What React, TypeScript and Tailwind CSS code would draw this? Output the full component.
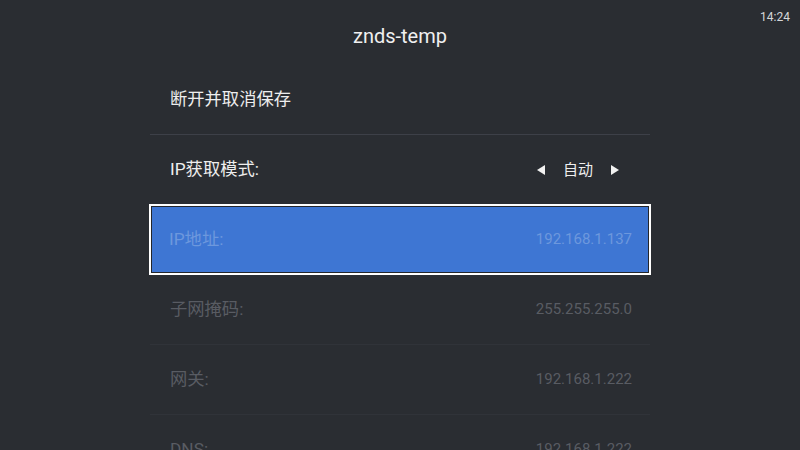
import React from "react";

const font = { fontFamily: "Roboto, 'Noto Sans CJK SC', sans-serif" };

function Row({ label, value, border = true }: { label: string; value: string; border?: boolean }) {
  return (
    <div className={`flex h-[70px] items-center justify-between pl-5 pr-[18px] ${border ? "border-b border-[#303339]" : ""}`}>
      <span className="text-[17.3px] text-[#595c63]">{label}</span>
      <span className="text-[15px] text-[#595c63]">{value}</span>
    </div>
  );
}

export default function App() {
  return (
    <div className="relative h-[450px] w-[800px] overflow-hidden bg-[#2a2d32]" style={font}>
      <div className="absolute right-[10px] top-[10px] text-[12px] leading-[14px] text-[#d6d7d9]">14:24</div>
      <div className="flex h-[65px] justify-center pt-[23px]">
        <span className="text-[20px] leading-[26px] text-[#f0f0f0]">znds-temp</span>
      </div>
      <div className="mx-auto w-[500px]">
        <div className="flex h-[70px] items-center border-b border-[#3d4048] px-5">
          <span className="text-[17.3px] text-[#eeeeee]">断开并取消保存</span>
        </div>
        <div className="flex h-[70px] items-center justify-between px-5">
          <span className="text-[17.3px] text-[#eeeeee]">IP获取模式:</span>
          <div className="flex items-center pr-[11px]">
            <svg width="8" height="10" viewBox="0 0 8 10" className="mr-[18px]">
              <path d="M8 0 L0 5 L8 10 Z" fill="#f2f2f2" />
            </svg>
            <span className="text-[15px] text-[#eeeeee]">自动</span>
            <svg width="8" height="10" viewBox="0 0 8 10" className="ml-[18px]">
              <path d="M0 0 L8 5 L0 10 Z" fill="#f2f2f2" />
            </svg>
          </div>
        </div>
        <div className="-mx-px -mt-px h-[71px] border-2 border-white">
          <div className="flex h-full items-center justify-between border border-[#23262b] bg-[#3e76d3] pl-[17px] pr-[16px]">
            <span className="text-[17.3px] text-[#6d98dd]">IP地址:</span>
            <span className="text-[15px] text-[#6d98dd]">192.168.1.137</span>
          </div>
        </div>
        <Row label="子网掩码:" value="255.255.255.0" />
        <Row label="网关:" value="192.168.1.222" />
        <Row label="DNS:" value="192.168.1.222" />
      </div>
    </div>
  );
}
